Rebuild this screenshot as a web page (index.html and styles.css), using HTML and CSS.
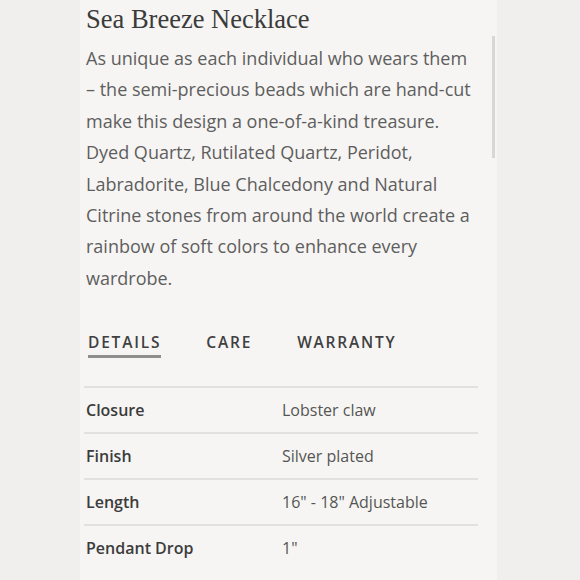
FILE: index.html
```html
<!DOCTYPE html>
<html lang="en">
<head>
<meta charset="utf-8">
<title>Sea Breeze Necklace</title>
<link rel="stylesheet" href="styles.css">
</head>
<body>
<div class="page">
  <section class="panel">
    <h1 class="title">Sea Breeze Necklace</h1>
    <p class="desc">As unique as each individual who wears them – the semi-precious beads which are hand-cut make this design a one-of-a-kind treasure. Dyed Quartz, Rutilated Quartz, Peridot, Labradorite, Blue Chalcedony and Natural Citrine stones from around the world create a rainbow of soft colors to enhance every wardrobe.</p>
    <nav class="tabs">
      <span class="tab active">DETAILS</span>
      <span class="tab">CARE</span>
      <span class="tab">WARRANTY</span>
    </nav>
    <div class="specs">
      <div class="row"><span class="label">Closure</span><span class="value">Lobster claw</span></div>
      <div class="row"><span class="label">Finish</span><span class="value">Silver plated</span></div>
      <div class="row"><span class="label">Length</span><span class="value">16" - 18" Adjustable</span></div>
      <div class="row"><span class="label">Pendant Drop</span><span class="value">1"</span></div>
    </div>
    <div class="scrollbar"></div>
  </section>
</div>
</body>
</html>
```
FILE: styles.css
```css
html, body {
  margin: 0;
  padding: 0;
  background: #f0efed;
}
.page {
  width: 580px;
  height: 580px;
  overflow: hidden;
  display: flex;
}
.panel {
  position: relative;
  margin-left: 80px;
  width: 417px;
  background: #f6f5f3;
  padding-left: 6px;
  box-sizing: border-box;
}
.title {
  margin: 0;
  padding-top: 3px;
  font-family: "Liberation Serif", serif;
  font-weight: 400;
  font-size: 26.5px;
  line-height: 33px;
  color: #3b3b3b;
}
.desc {
  margin: 7px 0 0;
  width: 392px;
  font-family: "Open Sans", sans-serif;
  font-weight: 400;
  font-size: 18px;
  line-height: 31.4px;
  color: #5e5e5e;
}
.tabs {
  display: flex;
  gap: 45px;
  margin-top: 37px;
  padding-left: 2px;
  font-family: "Open Sans", sans-serif;
  font-size: 15.5px;
  font-weight: 600;
  letter-spacing: 1.8px;
  color: #404040;
}
.tab {
  padding-bottom: 2px;
  border-bottom: 3px solid transparent;
}
.tab.active {
  border-bottom-color: #8e8e8e;
}
.specs {
  margin-top: 28px;
  width: 394px;
  margin-left: -2px;
  border-top: 2px solid #e2e1df;
}
.row {
  display: flex;
  align-items: center;
  height: 44px;
  border-bottom: 2px solid #e2e1df;
  padding-left: 2px;
  font-family: "Open Sans", sans-serif;
  font-size: 16px;
  color: #444;
}
.row:last-child {
  border-bottom: none;
}
.label {
  width: 196px;
  font-weight: 600;
  color: #3c3c3c;
}
.value {
  color: #555;
}
.scrollbar {
  position: absolute;
  left: 412px;
  top: 36px;
  width: 3px;
  height: 122px;
  background: #d8d7d5;
}
```
